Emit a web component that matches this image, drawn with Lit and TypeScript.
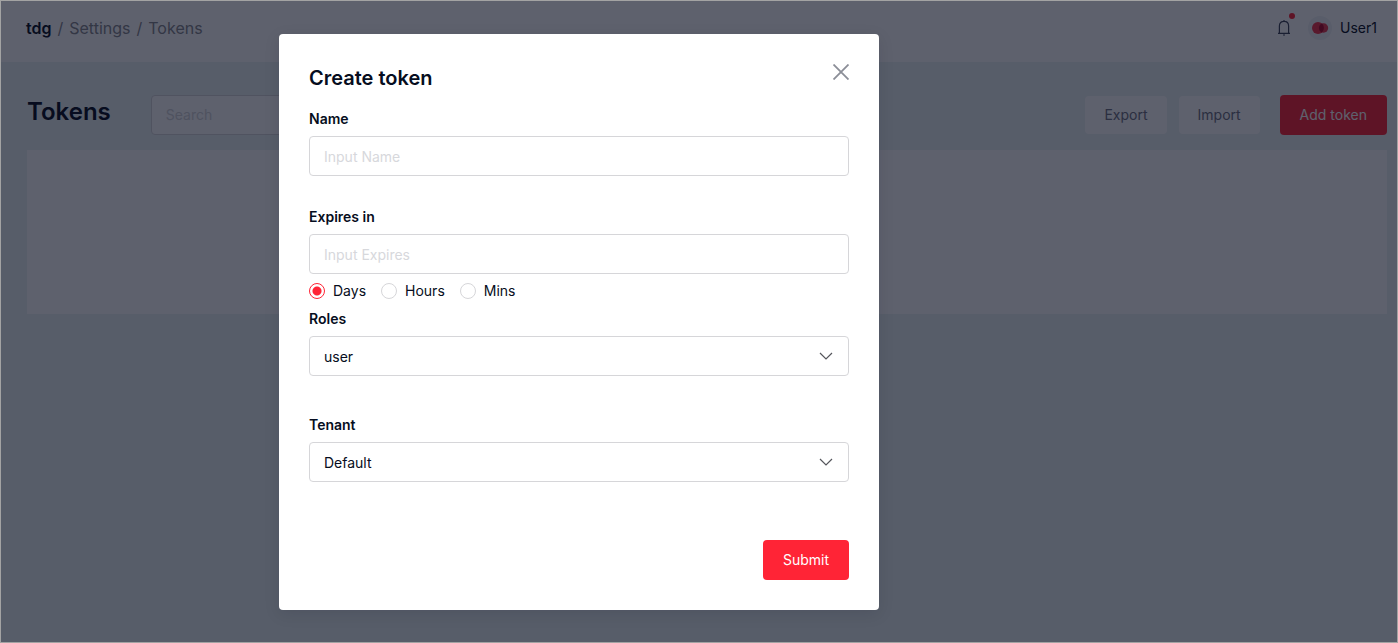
import { LitElement, html, css, svg } from "lit";
import { customElement, state } from "lit/decorators.js";

const chevron = svg`<svg class="chevron" viewBox="0 0 14 8" width="14" height="8" aria-hidden="true">
  <path d="M1 1 L7 7 L13 1" fill="none" stroke="#55565c" stroke-width="1.2"/></svg>`;

@customElement("token-form")
class TokenForm extends LitElement {
  @state() unit = "Days";

  static styles = css`
    :host {
      display: block;
      box-sizing: border-box;
      width: 600px;
      max-width: 100%;
      padding: 30px;
      background: #fff;
      border-radius: 4px;
      box-shadow: 0 4px 16px rgba(0, 10, 30, 0.1);
      color: #060d20;
      font: 14px/22px Inter, sans-serif;
    }
    * {
      box-sizing: border-box;
    }
    .head {
      display: flex;
      align-items: flex-start;
      justify-content: space-between;
      margin-bottom: 16px;
    }
    .title {
      margin: 0;
      font-size: 20px;
      line-height: 28px;
      font-weight: 600;
    }
    .close {
      display: flex;
      padding: 0;
      border: 0;
      background: none;
      cursor: pointer;
    }
    .field {
      display: flex;
      flex-direction: column;
      gap: 6px;
    }
    .spaced {
      margin-bottom: 30px;
    }
    .roles {
      margin: 6px 0 38px;
    }
    .label {
      font-weight: 600;
    }
    .input {
      width: 100%;
      height: 40px;
      padding: 0 14px;
      border: 1px solid #d6d6d9;
      border-radius: 4px;
      background: #fff;
      color: #060d20;
      font: inherit;
      appearance: none;
    }
    select.input {
      padding-top: 2px;
    }
    .input::placeholder {
      color: #d7d8dc;
      opacity: 1;
    }
    .pick {
      display: grid;
      align-items: center;
    }
    .pick > * {
      grid-area: 1 / 1;
    }
    .chevron {
      justify-self: end;
      margin-right: 16px;
      pointer-events: none;
    }
    .units {
      display: flex;
      gap: 15px;
      margin: 6px 0 0;
      padding: 0;
      border: 0;
    }
    .unit {
      display: flex;
      align-items: center;
      gap: 8px;
    }
    .radio {
      appearance: none;
      width: 16px;
      height: 16px;
      margin: 0;
      border: 1px solid #d6d6d9;
      border-radius: 50%;
      background: #fff;
    }
    .radio:checked {
      border-color: #ff2436;
      background: radial-gradient(circle, #ff2436 4px, #fff 5px);
    }
    .foot {
      display: flex;
      justify-content: flex-end;
      margin-top: 58px;
    }
    .submit {
      height: 40px;
      padding: 0 20px;
      border: 0;
      border-radius: 4px;
      background: #ff2436;
      color: #fff;
      font: inherit;
    }
  `;

  render() {
    return html`
      <form @submit=${(e: Event) => e.preventDefault()}>
        <div class="head">
          <h2 class="title">Create token</h2>
          <button class="close" type="button" aria-label="Close">
            <svg viewBox="0 0 16 16" width="16" height="16">
              <path d="M0.5 0.5 L15.5 15.5 M15.5 0.5 L0.5 15.5" stroke="#8b8e97" stroke-width="1.8" />
            </svg>
          </button>
        </div>
        <div class="field spaced">
          <label class="label" for="name">Name</label>
          <input class="input" id="name" placeholder="Input Name" />
        </div>
        <div class="field">
          <label class="label" for="expires">Expires in</label>
          <input class="input" id="expires" placeholder="Input Expires" />
        </div>
        <fieldset class="units" aria-label="Unit">
          ${["Days", "Hours", "Mins"].map(
            (u) => html`<label class="unit">
              <input class="radio" type="radio" name="unit" .checked=${this.unit === u} @change=${() => (this.unit = u)} />
              ${u}
            </label>`
          )}
        </fieldset>
        <div class="field roles">
          <label class="label" for="roles">Roles</label>
          <div class="pick">
            <select class="input" id="roles"><option>user</option></select>
            ${chevron}
          </div>
        </div>
        <div class="field">
          <label class="label" for="tenant">Tenant</label>
          <div class="pick">
            <select class="input" id="tenant"><option>Default</option></select>
            ${chevron}
          </div>
        </div>
        <div class="foot"><button class="submit" type="submit">Submit</button></div>
      </form>
    `;
  }
}

@customElement("app-root")
class AppRoot extends LitElement {
  static styles = css`
    :host {
      display: block;
      box-sizing: border-box;
      position: relative;
      min-height: 100vh;
      border: 1px solid #a3a3a3;
      background: #ebf2f4;
      color: #060d20;
      font: 14px/22px Inter, sans-serif;
    }
    * {
      box-sizing: border-box;
    }
    .top {
      display: flex;
      align-items: center;
      justify-content: space-between;
      height: 61px;
      padding: 0 20px 7px 25px;
      background: #fff;
    }
    .crumbs {
      display: flex;
      gap: 6px;
      font-size: 16px;
      color: #85868c;
    }
    .crumbs a {
      color: inherit;
      text-decoration: none;
    }
    .crumbs .home {
      color: #060d20;
      font-weight: 600;
    }
    .account {
      display: flex;
      align-items: center;
    }
    .bell {
      position: relative;
      display: flex;
      margin-right: 17px;
      padding: 0;
      border: 0;
      background: none;
    }
    .dot {
      position: absolute;
      top: -7px;
      right: -4px;
      width: 6px;
      height: 6px;
      border-radius: 50%;
      background: #ff2436;
    }
    .avatar {
      margin-right: 8px;
    }
    .main {
      padding: 32px 10px 0 26px;
    }
    .bar {
      display: flex;
      align-items: center;
      margin-bottom: 15px;
    }
    .heading {
      margin: 0 40px 6px 0;
      font-size: 24px;
      line-height: 30px;
      font-weight: 600;
    }
    .search {
      width: 300px;
      height: 40px;
      padding: 0 14px;
      border: 1px solid #d6d6d9;
      border-radius: 4px;
      background: #fff;
      font: inherit;
    }
    .search::placeholder {
      color: #d3d4d8;
      opacity: 1;
    }
    .actions {
      display: flex;
      align-items: center;
      gap: 12px;
      margin-left: auto;
      padding-top: 1px;
    }
    .btn {
      height: 38px;
      padding: 0 19px;
      border: 0;
      border-radius: 4px;
      background: #fff;
      color: #6d7080;
      font: inherit;
    }
    .add {
      height: 40px;
      margin-left: 8px;
      padding: 0 20px;
      background: #ff2436;
      color: #fff;
    }
    .panel {
      height: 164px;
      background: #fff;
    }
    .shade {
      position: absolute;
      inset: 0;
      padding: 33px 0 0 278px;
      background: rgba(7, 12, 31, 0.65);
    }
  `;

  render() {
    return html`
      <header class="top">
        <nav class="crumbs" aria-label="Breadcrumb">
          <a class="home" href="#">tdg</a><span>/</span><a href="#">Settings</a><span>/</span><a href="#">Tokens</a>
        </nav>
        <div class="account">
          <button class="bell" type="button" aria-label="Notifications">
            <svg viewBox="0 0 14 16" width="14" height="16" fill="none" stroke="#3c4358" stroke-width="1.2">
              <path d="M1 13.4 H13 M2.4 13.4 V6 C2.4 3 4.2 1.3 7 1.3 C9.8 1.3 11.6 3 11.6 6 V13.4 M7 0 V1.3 M6 15 H8" />
            </svg>
            <span class="dot"></span>
          </button>
          <svg class="avatar" viewBox="0 0 24 24" width="24" height="24" aria-hidden="true">
            <circle cx="12" cy="12" r="12" fill="#f0f3f5" />
            <circle cx="10" cy="12" r="6" fill="#f03248" />
            <circle cx="15.5" cy="12" r="4.7" fill="#e8384f" />
            <path d="M14 7.6 A6 6 0 0 1 14 16.4 A4.7 4.7 0 0 1 14 7.6 Z" fill="#b00828" />
          </svg>
          <span>User1</span>
        </div>
      </header>
      <main class="main">
        <div class="bar">
          <h1 class="heading">Tokens</h1>
          <input class="search" type="search" placeholder="Search" aria-label="Search" />
          <div class="actions">
            <button class="btn" type="button">Export</button>
            <button class="btn" type="button">Import</button>
            <button class="btn add" type="button">Add token</button>
          </div>
        </div>
        <section class="panel"></section>
      </main>
      <div class="shade">
        <token-form role="dialog" aria-modal="true" aria-label="Create token"></token-form>
      </div>
    `;
  }
}
